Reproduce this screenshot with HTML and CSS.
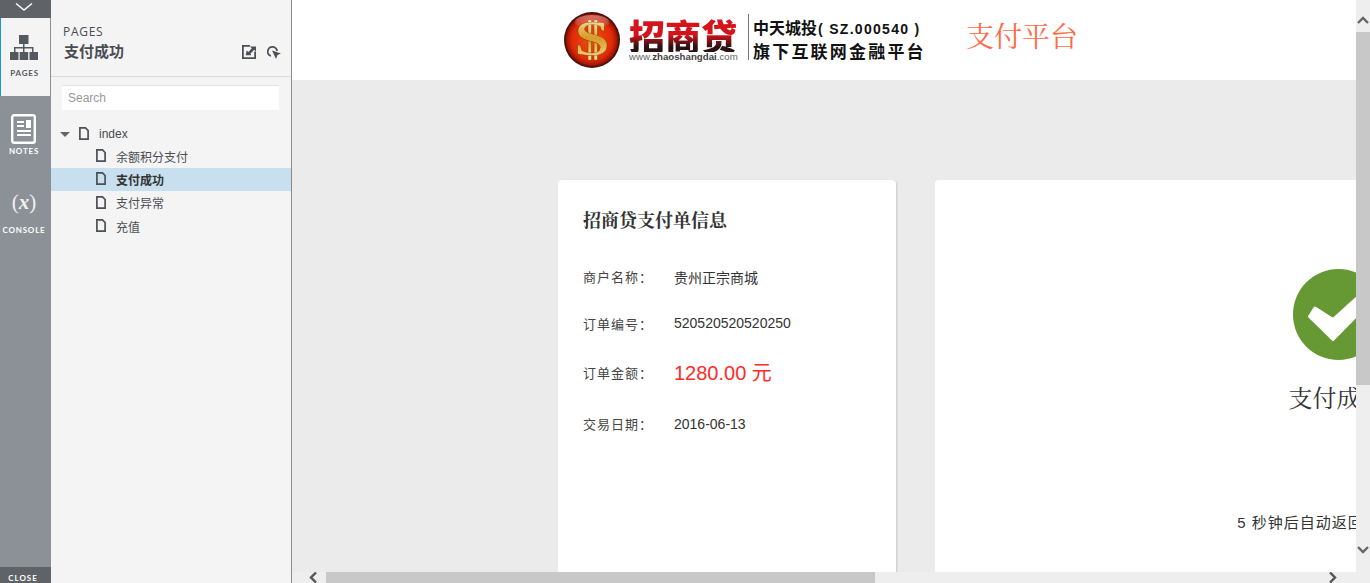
FILE: index.html
```html
<!DOCTYPE html>
<html lang="zh">
<head>
<meta charset="utf-8">
<title>支付成功</title>
<link rel="stylesheet" href="styles.css">
</head>
<body>
<nav class="rail">
  <div class="rail-top"><svg width="18" height="8" viewBox="0 0 18 8"><path d="M1 0.5 9 7 17 0.5" fill="none" stroke="#fff" stroke-width="1.4"/></svg></div>
  <div class="tab tab-active">
    <svg class="tab-icon" width="28" height="25" viewBox="0 0 28 25"><path d="M9 0h9.500v9H9zM13 9h1.500v3.500H13zM4 12h19.500v5H22v-3.500H14.500V17H13v-3.500H5.500V17H4z" fill="#54585f"/><path d="M0 17h8.500v8H0zM9.700 17h8.500v8H9.700zM19.500 17H28v8h-8.500z" fill="#54585f"/></svg>
    <span class="tab-label">PAGES</span>
  </div>
  <div class="tab tab-notes">
    <svg class="tab-icon" width="26" height="30" viewBox="0 0 26 30"><rect x="1.200" y="1.200" width="22.600" height="27.600" rx="2" fill="none" stroke="#fff" stroke-width="2.400"/><path d="M6 7h7v2H6zM6 11h7v2H6zM15 6h5v8h-5zM6 16h14v2H6zM6 20h14v2H6z" fill="#fff"/></svg>
    <span class="tab-label">NOTES</span>
  </div>
  <div class="tab tab-console">
    <span class="console-mark">(<i>x</i>)</span>
    <span class="tab-label">CONSOLE</span>
  </div>
  <div class="rail-close">CLOSE</div>
</nav>

<aside class="panel">
  <header class="panel-head">
    <div class="panel-kicker">PAGES</div>
    <div class="panel-title-row">
      <div class="panel-title">支付成功</div>
      <svg class="panel-icon" width="14" height="14" viewBox="0 0 15 15"><path d="M0 0h8.500v1.900H1.900v11.200h11.200V7H15v8H0z" fill="#4c4f55"/><path d="M4 11 5 6 7 7.500 10.500 3.500 8.500 1.500H15V7l-2-1.800L9 9.300 10 11z" fill="#4c4f55"/></svg>
      <svg class="panel-icon" width="15" height="15" viewBox="0 0 15 15"><path d="M6.500 1a5.500 5.500 0 0 0-1.500 10.800V10A3.800 3.800 0 1 1 10.200 6H12A5.500 5.500 0 0 0 6.500 1z" fill="#4c4f55"/><path d="M6 5.500 15 8.500 11.500 10 10 14z" fill="#4c4f55"/></svg>
    </div>
  </header>
  <div class="search">Search</div>
  <ul class="tree">
    <li class="tree-row tree-root">
      <span class="caret"></span>
      <svg class="doc" width="10" height="13" viewBox="0 0 10 13"><path d="M.9.9h5.600L9.100 3.500v8.600H.9z" fill="none" stroke="#4c4f55" stroke-width="1.700"/></svg>
      <span>index</span>
    </li>
    <li class="tree-row tree-child">
      <svg class="doc" width="10" height="13" viewBox="0 0 10 13"><path d="M.9.9h5.600L9.100 3.500v8.600H.9z" fill="none" stroke="#4c4f55" stroke-width="1.700"/></svg>
      <span>余额积分支付</span>
    </li>
    <li class="tree-row tree-child tree-selected">
      <svg class="doc" width="10" height="13" viewBox="0 0 10 13"><path d="M.9.9h5.600L9.100 3.500v8.600H.9z" fill="none" stroke="#4c4f55" stroke-width="1.700"/></svg>
      <span>支付成功</span>
    </li>
    <li class="tree-row tree-child">
      <svg class="doc" width="10" height="13" viewBox="0 0 10 13"><path d="M.9.9h5.600L9.100 3.500v8.600H.9z" fill="none" stroke="#4c4f55" stroke-width="1.700"/></svg>
      <span>支付异常</span>
    </li>
    <li class="tree-row tree-child">
      <svg class="doc" width="10" height="13" viewBox="0 0 10 13"><path d="M.9.9h5.600L9.100 3.500v8.600H.9z" fill="none" stroke="#4c4f55" stroke-width="1.700"/></svg>
      <span>充值</span>
    </li>
  </ul>
</aside>

<div class="stage">
  <div class="stage-row">
    <main class="page">
      <header class="brand">
        <svg class="brand-coin" width="58" height="58" viewBox="0 0 58 58">
          <defs>
            <radialGradient id="coin" cx=".5" cy=".5" r=".5"><stop offset="0" stop-color="#f2500f"/><stop offset=".72" stop-color="#e22a08"/><stop offset=".88" stop-color="#a81808"/><stop offset="1" stop-color="#2e0a06"/></radialGradient>
            <linearGradient id="gold" x1="0" y1="0" x2="0" y2="1"><stop offset="0" stop-color="#fff2b0"/><stop offset=".5" stop-color="#d99a26"/><stop offset="1" stop-color="#fbe9a0"/></linearGradient>
            <linearGradient id="shine" x1="0" y1="0" x2="0" y2="1"><stop offset="0" stop-color="#fff" stop-opacity=".4"/><stop offset="1" stop-color="#fff" stop-opacity="0"/></linearGradient>
          </defs>
          <circle cx="29" cy="29" r="28" fill="url(#coin)"/>
          <path d="M25 9h3.500v40H25zM31 9h3.500v40H31z" fill="url(#gold)" stroke="#7a3a08" stroke-width=".5"/>
          <text x="0" y="44" transform="translate(29 0) scale(1.280 1)" text-anchor="middle" class="coin-glyph" fill="url(#gold)" stroke="#7a3a08" stroke-width=".4">S</text>
          <ellipse cx="29" cy="11" rx="17" ry="7" fill="url(#shine)"/>
        </svg>
        <div class="brand-name">
          <div class="brand-cn">招商贷</div>
          <div class="brand-url">www.<b>zhaoshangdai</b>.com</div>
        </div>
        <div class="brand-rule"></div>
        <div class="brand-tag">
          <div class="brand-tag-a">中天城投<span class="brand-code">( SZ.000540 )</span></div>
          <div class="brand-tag-b">旗下互联网金融平台</div>
        </div>
        <div class="brand-platform">支付平台</div>
      </header>
      <section class="cards">
        <article class="card card-info">
          <h2 class="info-title">招商贷支付单信息</h2>
          <div class="info-row"><span class="info-key">商户名称：</span><span class="info-val info-cn">贵州正宗商城</span></div>
          <div class="info-row"><span class="info-key">订单编号：</span><span class="info-val info-num">520520520520250</span></div>
          <div class="info-row info-row-tall"><span class="info-key">订单金额：</span><span class="info-val info-money">1280.00 元</span></div>
          <div class="info-row info-row-tall"><span class="info-key">交易日期：</span><span class="info-val">2016-06-13</span></div>
        </article>
        <article class="card card-result">
          <svg class="ok" width="91" height="91" viewBox="0 0 91 91"><circle cx="45.500" cy="45.500" r="45.500" fill="#669933"/><path d="M22 39 16.500 47.500 40 70.500 74 36 65 28 40 50.500z" fill="#fff" stroke="#fff" stroke-width="3" stroke-linejoin="round"/></svg>
          <h1 class="result-title">支付成功</h1>
          <p class="result-note">5 秒钟后自动返回商户页面</p>
        </article>
      </section>
    </main>
    <div class="vbar">
      <svg class="v-up" width="12" height="8" viewBox="0 0 12 8"><path d="M1 7 6 2 11 7" fill="none" stroke="#666" stroke-width="2.400"/></svg>
      <div class="v-thumb"></div>
      <svg class="v-down" width="12" height="8" viewBox="0 0 12 8"><path d="M1 1 6 6 11 1" fill="none" stroke="#666" stroke-width="2.400"/></svg>
    </div>
  </div>
  <div class="hbar">
    <svg class="h-left" width="8" height="11" viewBox="0 0 8 11"><path d="M7 .5 2 5.500 7 10.500" fill="none" stroke="#555" stroke-width="2.400"/></svg>
    <div class="h-thumb"></div>
    <svg class="h-right" width="8" height="11" viewBox="0 0 8 11"><path d="M1 .5 6 5.500 1 10.500" fill="none" stroke="#555" stroke-width="2.400"/></svg>
  </div>
</div>
</body>
</html>
```
FILE: styles.css
```css
* { box-sizing: border-box; }
html, body { margin: 0; height: 100%; }
body {
  display: flex;
  height: 583px;
  overflow: hidden;
  font-family: "Liberation Sans", "Noto Sans CJK SC", sans-serif;
  color: #333;
  background: #ebebeb;
}

/* left rail */
.rail {
  width: 51px;
  flex: none;
  display: flex;
  flex-direction: column;
  background: #8c9097;
}
.rail-top {
  height: 18px;
  background: #5f6267;
  display: flex;
  justify-content: center;
  padding: 3px 3px 0 0;
}
.tab {
  display: flex;
  flex-direction: column;
  align-items: center;
  color: #fff;
}
.tab-active {
  height: 78px;
  width: 50px;
  padding: 17px 2px 0 0;
  background: #f4f4f4;
  border-left: 1px solid #1c94e0;
  color: #54585f;
}
.tab-active .tab-icon { margin-right: 2px; }
.tab-notes { height: 78px; padding: 18px 3px 0 0; }
.tab-console { padding: 16px 3px 0 0; }
.tab-label {
  font-family: "Lato", "Liberation Sans", sans-serif;
  font-size: 8px;
  font-weight: 700;
  letter-spacing: .8px;
  line-height: 10px;
  margin-top: 8px;
}
.tab-notes .tab-label { margin-top: 2px; }
.console-mark {
  font-family: "Liberation Serif", serif;
  font-size: 21px;
  line-height: 24px;
  color: #f1f1f1;
  font-weight: 400;
}
.console-mark i { font-weight: 700; }
.tab-console .tab-label { margin-top: 11px; }
.rail-close {
  margin-top: auto;
  height: 16px;
  padding-right: 5px;
  background: #5f6267;
  color: #fff;
  font-family: "Lato", "Liberation Sans", sans-serif;
  font-size: 8px;
  font-weight: 700;
  letter-spacing: 1px;
  text-align: center;
  line-height: 22px;
  overflow: hidden;
}

/* pages panel */
.panel {
  width: 241px;
  flex: none;
  background: #f4f4f4;
  border-right: 1px solid #8c8c8c;
}
.panel-head {
  height: 77px;
  padding: 25px 10px 0 12px;
  border-bottom: 1px solid #d9d9d9;
}
.panel-kicker {
  font-family: "Open Sans", "Liberation Sans", sans-serif;
  font-size: 12px;
  line-height: 14px;
  letter-spacing: .7px;
  color: #4a4d52;
}
.panel-title-row {
  display: flex;
  align-items: center;
  height: 20px;
  margin-top: 1px;
}
.panel-title {
  flex: 1;
  font-size: 15px;
  font-weight: 700;
  color: #4a4d52;
  margin-left: 1px;
}
.panel-icon { margin-left: 9px; margin-top: 4px; }
.panel-icon + .panel-icon { margin-left: 10px; }
.search {
  height: 25px;
  margin: 8px 12px 0 11px;
  padding-left: 6px;
  background: #fff;
  border-top: 1px solid #e3e3e3;
  font-size: 12px;
  line-height: 24px;
  color: #999;
}
.tree {
  list-style: none;
  margin: 12px 0 0;
  padding: 0;
}
.tree-row {
  display: flex;
  align-items: center;
  height: 23.400px;
  font-size: 12px;
  color: #4a4d52;
}
.tree-root { padding: 2px 0 0 9px; height: 22.400px; }
.tree-child { padding-left: 45px; }
.tree-selected {
  background: #c7dfee;
  font-weight: 700;
  color: #333;
}
.caret {
  width: 0;
  height: 0;
  border-left: 5px solid transparent;
  border-right: 5px solid transparent;
  border-top: 5px solid #666;
  margin-right: 9px;
}
.doc { margin-right: 10px; margin-top: -1px; }

/* main stage */
.stage {
  flex: 1;
  min-width: 0;
  display: flex;
  flex-direction: column;
}
.stage-row {
  flex: 1;
  min-height: 0;
  display: flex;
}
.page {
  flex: 1;
  min-width: 0;
  overflow: hidden;
  background: #ebebeb;
}

.brand {
  height: 80px;
  background: #fff;
  display: flex;
  align-items: flex-start;
  padding-left: 271px;
  width: 1078px;
}
.brand-coin { margin-top: 11px; flex: none; }
.coin-glyph {
  font-family: "Liberation Serif", serif;
  font-size: 50px;
  font-weight: 700;
}
.brand-name { margin: 18px 0 0 8px; width: 110px; }
.brand-cn {
  font-family: "Noto Sans CJK SC", sans-serif;
  font-weight: 900;
  font-size: 36px;
  line-height: 34px;
  white-space: nowrap;
  background: linear-gradient(#d4141a 0 50%, #2a1212 85%);
  -webkit-background-clip: text;
  background-clip: text;
  color: transparent;
}
.brand-url {
  font-size: 9.700px;
  line-height: 9px;
  color: #666;
  white-space: nowrap;
}
.brand-url b { color: #444; }
.brand-rule {
  width: 1px;
  height: 46px;
  margin: 14px 0 0 9px;
  background: #777;
}
.brand-tag {
  margin: 16px 0 0 4px;
  width: 213px;
  color: #111;
  font-weight: 700;
  white-space: nowrap;
}
.brand-tag-a { font-size: 16px; line-height: 22px; font-family: "Noto Sans CJK SC", sans-serif; }
.brand-code { font-family: "Liberation Sans", sans-serif; font-size: 14px; letter-spacing: 1.300px; margin-left: 1px; }
.brand-tag-b { font-size: 17px; line-height: 22px; letter-spacing: 2.200px; font-family: "Noto Sans CJK SC", sans-serif; }
.brand-platform {
  margin-top: 15px;
  font-family: "Noto Serif CJK SC", "Liberation Serif", "Noto Sans CJK SC", serif;
  font-size: 28px;
  line-height: 40px;
  color: #ff6a45;
  white-space: nowrap;
}

.cards {
  display: flex;
  gap: 39px;
  padding: 100px 0 0 266px;
  width: 1900px;
}
.card {
  background: #fff;
  height: 500px;
  border-radius: 4px 4px 0 0;
}
.card-info {
  width: 338px;
  padding: 0 25px;
  box-shadow: 1px 1px 2px rgba(0, 0, 0, .15);
}
.info-title {
  margin: 27px 0 22px;
  font-family: "Noto Serif CJK SC", "Liberation Serif", "Noto Sans CJK SC", serif;
  font-size: 18px;
  line-height: 24px;
  font-weight: 700;
  color: #333;
  white-space: nowrap;
}
.info-row {
  display: flex;
  align-items: center;
  height: 47px;
  color: #333;
}
.info-row-tall { height: 51px; }
.info-key {
  width: 91px;
  flex: none;
  font-size: 13px;
  letter-spacing: 1px;
  color: #444;
}
.info-val { font-size: 14px; }
.info-num { margin-bottom: 2px; }
.info-money { font-size: 20px; color: #ff2a2a; margin-bottom: 3px; }

.card-result {
  width: 807px;
  display: flex;
  flex-direction: column;
  align-items: center;
}
.ok { margin-top: 89px; }
.result-title {
  margin: 21px 0 0;
  padding-right: 4px;
  font-family: "Noto Serif CJK SC", "Liberation Serif", "Noto Sans CJK SC", serif;
  font-size: 24px;
  line-height: 32px;
  font-weight: 400;
  color: #333;
  white-space: nowrap;
}
.result-note {
  margin: 100px 0 0;
  padding-right: 12px;
  font-size: 15px;
  line-height: 20px;
  letter-spacing: 1px;
  color: #333;
  white-space: nowrap;
}

/* scrollbars */
.vbar {
  width: 14px;
  flex: none;
  display: flex;
  flex-direction: column;
  align-items: center;
  background: #eee;
}
.v-up { margin-top: 16px; flex: none; }
.v-thumb {
  width: 14px;
  height: 353px;
  margin-top: 8px;
  background: #c8c8c8;
  flex: none;
}
.v-down { margin-top: auto; margin-bottom: 18px; flex: none; }
.hbar {
  height: 11px;
  flex: none;
  display: flex;
  align-items: center;
  padding-left: 17px;
  padding-right: 33px;
  background: #eee;
}
.h-thumb {
  width: 549px;
  height: 11px;
  margin-left: 9px;
  background: #c8c8c8;
}
.h-right { margin-left: auto; }
```
